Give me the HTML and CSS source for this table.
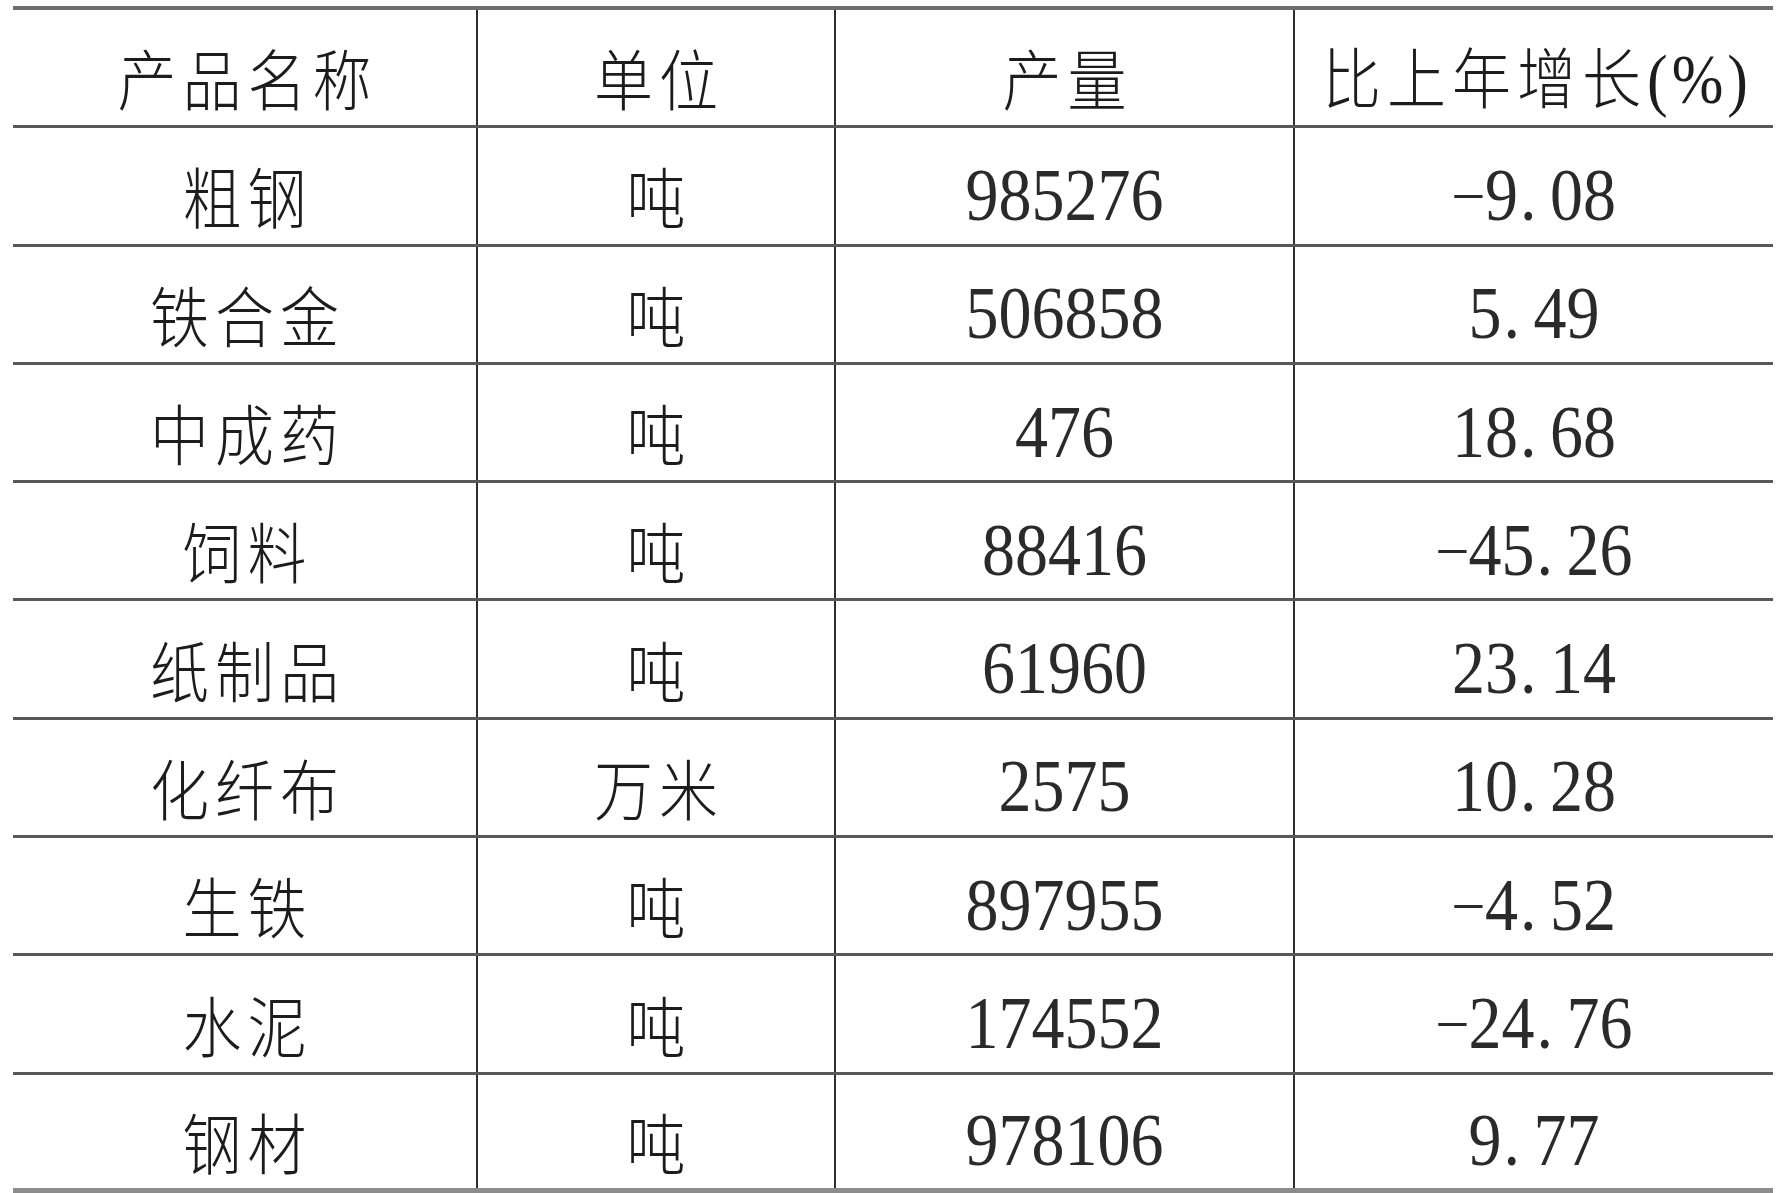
FILE: index.html
```html
<!DOCTYPE html>
<html lang="zh-CN">
<head>
<meta charset="utf-8">
<title>主要工业产品产量</title>
<link rel="stylesheet" href="styles.css">
</head>
<body>
<div class="sheet">
  <div class="row head">
    <div class="cell"><span class="t cjk">产品名称</span></div>
    <div class="cell"><span class="t cjk">单位</span></div>
    <div class="cell"><span class="t cjk">产量</span></div>
    <div class="cell"><span class="t cjk">比上年增长<span class="asc">(%)</span></span></div>
  </div>
  <div class="row">
    <div class="cell"><span class="t cjk">粗钢</span></div>
    <div class="cell"><span class="t cjk">吨</span></div>
    <div class="cell"><span class="t num">985276</span></div>
    <div class="cell"><span class="t num"><span class="mi">-</span>9<span class="pt">.</span>08</span></div>
  </div>
  <div class="row">
    <div class="cell"><span class="t cjk">铁合金</span></div>
    <div class="cell"><span class="t cjk">吨</span></div>
    <div class="cell"><span class="t num">506858</span></div>
    <div class="cell"><span class="t num">5<span class="pt">.</span>49</span></div>
  </div>
  <div class="row">
    <div class="cell"><span class="t cjk">中成药</span></div>
    <div class="cell"><span class="t cjk">吨</span></div>
    <div class="cell"><span class="t num">476</span></div>
    <div class="cell"><span class="t num">18<span class="pt">.</span>68</span></div>
  </div>
  <div class="row">
    <div class="cell"><span class="t cjk">饲料</span></div>
    <div class="cell"><span class="t cjk">吨</span></div>
    <div class="cell"><span class="t num">88416</span></div>
    <div class="cell"><span class="t num"><span class="mi">-</span>45<span class="pt">.</span>26</span></div>
  </div>
  <div class="row">
    <div class="cell"><span class="t cjk">纸制品</span></div>
    <div class="cell"><span class="t cjk">吨</span></div>
    <div class="cell"><span class="t num">61960</span></div>
    <div class="cell"><span class="t num">23<span class="pt">.</span>14</span></div>
  </div>
  <div class="row">
    <div class="cell"><span class="t cjk">化纤布</span></div>
    <div class="cell"><span class="t cjk">万米</span></div>
    <div class="cell"><span class="t num">2575</span></div>
    <div class="cell"><span class="t num">10<span class="pt">.</span>28</span></div>
  </div>
  <div class="row">
    <div class="cell"><span class="t cjk">生铁</span></div>
    <div class="cell"><span class="t cjk">吨</span></div>
    <div class="cell"><span class="t num">897955</span></div>
    <div class="cell"><span class="t num"><span class="mi">-</span>4<span class="pt">.</span>52</span></div>
  </div>
  <div class="row">
    <div class="cell"><span class="t cjk">水泥</span></div>
    <div class="cell"><span class="t cjk">吨</span></div>
    <div class="cell"><span class="t num">174552</span></div>
    <div class="cell"><span class="t num"><span class="mi">-</span>24<span class="pt">.</span>76</span></div>
  </div>
  <div class="row last">
    <div class="cell"><span class="t cjk">钢材</span></div>
    <div class="cell"><span class="t cjk">吨</span></div>
    <div class="cell"><span class="t num">978106</span></div>
    <div class="cell"><span class="t num">9<span class="pt">.</span>77</span></div>
  </div>
</div>
</body>
</html>
```
FILE: styles.css
```css
html, body {
  margin: 0;
  padding: 0;
  background: #ffffff;
}

body {
  font-family: "Liberation Serif", "Noto Sans CJK SC", serif;
  color: #1c1c1c;
}

.sheet {
  margin: 6px 0 0 13px;
  width: 1760px;
  border-top: 4px solid #6e6e6e;
}

.row {
  display: grid;
  grid-template-columns: 463px 358px 459px 480px;
  height: 118.3px;
  box-sizing: border-box;
  border-bottom: 3px solid #585858;
}

.row.last {
  border-bottom: 5px solid #8c8c8c;
}

.cell {
  display: flex;
  align-items: center;
  justify-content: center;
  padding-top: 18px;
  box-sizing: border-box;
}

.cell + .cell {
  border-left: 2px solid #2e2e2e;
}

.t {
  display: inline-block;
  white-space: nowrap;
  transform: scaleY(1.12);
}

.cjk {
  font-family: "Noto Sans CJK SC", sans-serif;
  font-weight: 300;
  font-size: 59px;
  line-height: 59px;
  letter-spacing: 6px;
  padding-left: 6px;
}

.asc {
  font-family: "Liberation Serif", serif;
  font-weight: 400;
  font-size: 62px;
  letter-spacing: 4px;
}

.num {
  font-family: "Liberation Serif", serif;
  font-size: 66px;
  line-height: 66px;
  color: #2a2a2a;
}

.mi {
  display: inline-block;
  width: 33px;
  text-align: center;
  transform: translateY(-2px) scale(1.65, 0.55);
}

.pt {
  display: inline-block;
  width: 32px;
  text-align: left;
  padding-left: 2px;
  box-sizing: border-box;
}
```
